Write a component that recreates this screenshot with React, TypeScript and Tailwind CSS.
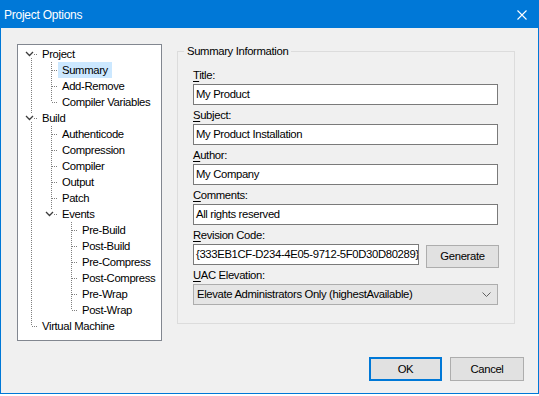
import React from 'react'

type Row = {
  label: string
  depth: number
  rails: boolean[]
  open?: boolean
  first?: boolean
  last?: boolean
  selected?: boolean
}

const rows: Row[] = [
  { label: 'Project', depth: 0, rails: [], open: true, first: true },
  { label: 'Summary', depth: 1, rails: [true], selected: true },
  { label: 'Add-Remove', depth: 1, rails: [true] },
  { label: 'Compiler Variables', depth: 1, rails: [true], last: true },
  { label: 'Build', depth: 0, rails: [], open: true },
  { label: 'Authenticode', depth: 1, rails: [true] },
  { label: 'Compression', depth: 1, rails: [true] },
  { label: 'Compiler', depth: 1, rails: [true] },
  { label: 'Output', depth: 1, rails: [true] },
  { label: 'Patch', depth: 1, rails: [true] },
  { label: 'Events', depth: 1, rails: [true], open: true, last: true },
  { label: 'Pre-Build', depth: 2, rails: [true, false] },
  { label: 'Post-Build', depth: 2, rails: [true, false] },
  { label: 'Pre-Compress', depth: 2, rails: [true, false] },
  { label: 'Post-Compress', depth: 2, rails: [true, false] },
  { label: 'Pre-Wrap', depth: 2, rails: [true, false] },
  { label: 'Post-Wrap', depth: 2, rails: [true, false], last: true },
  { label: 'Virtual Machine', depth: 0, rails: [], last: true },
]

const DOT = '#808080'

function Rail({ on }: { on: boolean }) {
  return (
    <svg width="20" height="16" className="shrink-0">
      {on && <line x1="13.5" x2="13.5" y1="0" y2="16" stroke={DOT} strokeDasharray="1 1" />}
    </svg>
  )
}

function Branch({ first, last, open }: { first?: boolean; last?: boolean; open?: boolean }) {
  const gapTop = open ? 3 : 8
  const gapBottom = open ? 12 : 8
  return (
    <svg width="20" height="16" className="shrink-0">
      {!first && <line x1="13.5" x2="13.5" y1="0" y2={gapTop} stroke={DOT} strokeDasharray="1 1" />}
      {!last && <line x1="13.5" x2="13.5" y1={gapBottom} y2="16" stroke={DOT} strokeDasharray="1 1" />}
      <line x1={open ? 16 : 14} x2="20" y1="8.5" y2="8.5" stroke={DOT} strokeDasharray="1 1" />
      {open && <polyline points="8,6 11.5,9.5 15,6" fill="none" stroke="#3c3c3c" strokeWidth="1.3" />}
    </svg>
  )
}

function TreeRow({ row }: { row: Row }) {
  return (
    <div className="flex h-4 items-center">
      {row.rails.map((on, i) => (
        <Rail key={i} on={on} />
      ))}
      <Branch first={row.first} last={row.last} open={row.open} />
      <span className={`flex h-4 items-center whitespace-nowrap px-[4px] ${row.selected ? 'bg-[#cce8ff]' : ''}`}>
        {row.label}
      </span>
    </div>
  )
}

function Label({ k, rest }: { k: string; rest: string }) {
  return (
    <div className="mb-[2px] leading-[14px]">
      <span className="underline underline-offset-2">{k}</span>
      {rest}
    </div>
  )
}

function Field({ k, rest, value }: { k: string; rest: string; value: string }) {
  return (
    <div className="mb-[3px]">
      <Label k={k} rest={rest} />
      <div className="flex h-[21px] w-[305px] items-center border border-[#7a7a7a] bg-white px-[2px]">{value}</div>
    </div>
  )
}

export default function App() {
  return (
    <div className="h-[396px] w-[539px] bg-white font-['Liberation_Sans',Arial,sans-serif] text-[11.3px] tracking-[-0.35px] text-black">
      <div className="flex h-[394px] w-[539px] flex-col border border-[#0078d7] bg-[#f0f0f0]">
        <div className="flex h-[27px] shrink-0 items-center justify-between bg-[#0078d7] pl-[3px] pr-[11px] text-[12px] tracking-[-0.25px] text-white">
          <span>Project Options</span>
          <svg width="10" height="10" viewBox="0 0 10 10">
            <path d="M0.5 0.5 L9.5 9.5 M9.5 0.5 L0.5 9.5" stroke="#fff" strokeWidth="1.1" />
          </svg>
        </div>

        <div className="flex flex-1 flex-col pt-[16px]">
          <div className="flex gap-[15px] pl-[16px]">
            <div className="h-[297px] w-[145px] border border-[#828790] bg-white pt-[1px]">
              {rows.map((r) => (
                <TreeRow key={r.label} row={r} />
              ))}
            </div>

            <fieldset className="h-[280px] w-[337px] border border-[#dcdcdc] px-[6px]">
              <legend className="px-[3px] leading-[14px]">Summary Information</legend>
              <div className="px-[9px] pt-[10px]">
                <Field k="T" rest="itle:" value="My Product" />
                <Field k="S" rest="ubject:" value="My Product Installation" />
                <Field k="A" rest="uthor:" value="My Company" />
                <Field k="C" rest="omments:" value="All rights reserved" />
                <Label k="R" rest="evision Code:" />
                <div className="flex items-start gap-[7px]">
                  <div className="flex h-[21px] w-[226px] items-center overflow-hidden whitespace-nowrap border border-[#7a7a7a] bg-white px-[2px]">
                    {'{333EB1CF-D234-4E05-9712-5F0D30D80289}'}
                  </div>
                  <div className="mt-[1px] flex h-[23px] w-[73px] items-center justify-center border border-[#adadad] bg-[#e1e1e1]">
                    Generate
                  </div>
                </div>
                <Label k="U" rest="AC Elevation:" />
                <div className="flex h-[21px] w-[305px] items-center justify-between border border-[#adadad] bg-[#e5e5e5] pl-[3px] pr-[6px]">
                  <span>Elevate Administrators Only (highestAvailable)</span>
                  <svg width="9" height="6" viewBox="0 0 9 6">
                    <polyline points="0.5,0.5 4.5,4.5 8.5,0.5" fill="none" stroke="#606060" />
                  </svg>
                </div>
              </div>
            </fieldset>
          </div>

          <div className="mt-auto flex justify-end gap-[8px] pb-[12px] pr-[14px]">
            <div className="flex h-[24px] w-[73px] items-center justify-center border-2 border-[#0078d7] bg-[#e1e1e1]">OK</div>
            <div className="flex h-[24px] w-[74px] items-center justify-center border border-[#adadad] bg-[#e1e1e1]">Cancel</div>
          </div>
        </div>
      </div>
    </div>
  )
}
